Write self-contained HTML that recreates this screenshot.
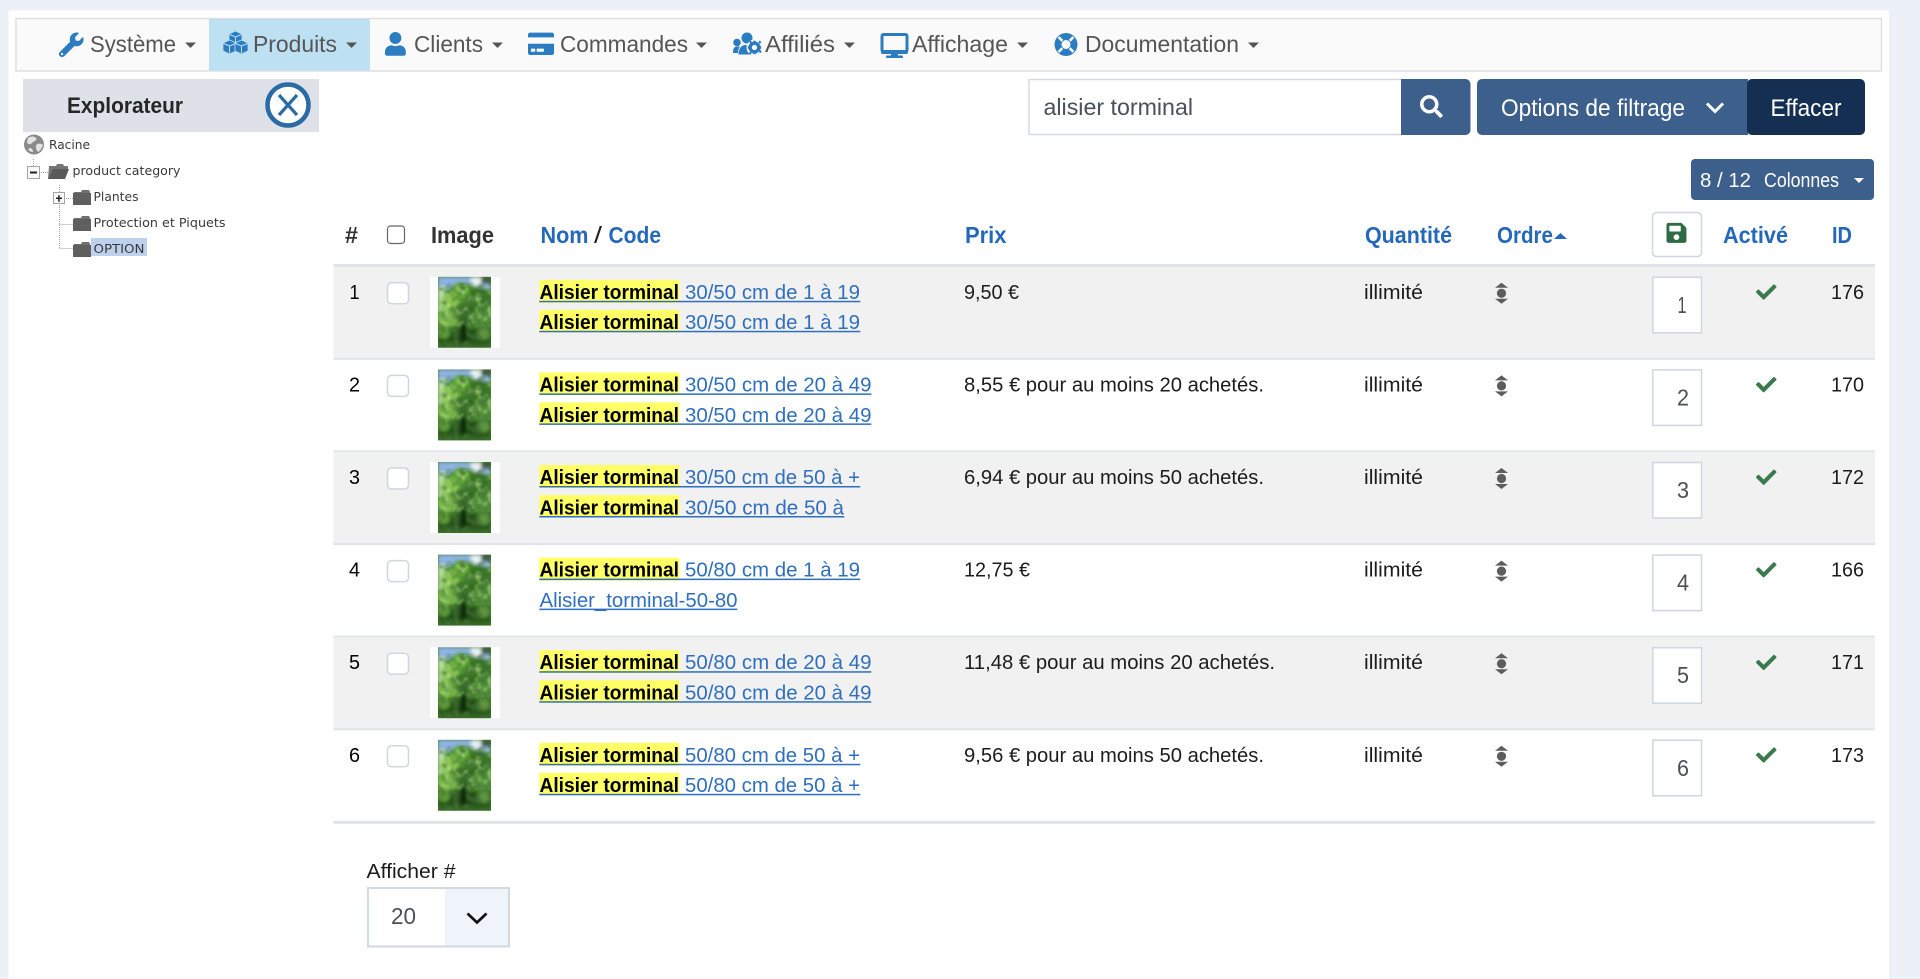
<!DOCTYPE html>
<html lang="fr">
<head>
<meta charset="utf-8">
<title>Produits</title>
<style>
html,body{margin:0;padding:0;width:1920px;height:979px;overflow:hidden;background:#ecf0f7}
svg{display:block}
text{font-family:"Liberation Sans",sans-serif;white-space:pre}
.nav{font-size:23.5px;fill:#555}
.th{font-size:23px;font-weight:bold;fill:#2468bb}
.thd{font-size:23px;font-weight:bold;fill:#333}
.sl{font-size:23px;font-weight:normal;fill:#222}
.td{font-size:20px;fill:#1c1c1c}
.num{font-size:20.5px;fill:#000}
.hl{font-size:20px;font-weight:bold;fill:#000}
.lk{font-size:20px;fill:#2f6fbe}
.tree{font-family:"DejaVu Sans",sans-serif;font-size:12.5px;fill:#3a3a3a}
.btn{font-size:24px;fill:#fff}
.inp{font-size:23.5px;fill:#495057}
.dg{font-size:23px;fill:#495057}
</style>
</head>
<body>
<svg width="1920" height="979" viewBox="0 0 1920 979" xmlns="http://www.w3.org/2000/svg">
<defs>
<filter id="b" x="-10%" y="-10%" width="120%" height="120%"><feGaussianBlur stdDeviation="1.8"/></filter>
<filter id="dk" x="0" y="0" width="100%" height="100%"><feTurbulence type="fractalNoise" baseFrequency=".14" numOctaves="2" seed="4"/><feColorMatrix values="0 0 0 0 .06  0 0 0 0 .17  0 0 0 0 .04  2.2 0 0 0 -.95"/><feGaussianBlur stdDeviation=".9"/></filter>
<filter id="lt" x="0" y="0" width="100%" height="100%"><feTurbulence type="fractalNoise" baseFrequency=".16" numOctaves="2" seed="11"/><feColorMatrix values="0 0 0 0 .55  0 0 0 0 .8  0 0 0 0 .3  0 1.6 0 0 -.72"/><feGaussianBlur stdDeviation=".9"/></filter>
<clipPath id="tc"><rect x="0" y="0" width="53" height="71"/></clipPath>
<g id="tree" clip-path="url(#tc)">
<rect width="53" height="71" fill="#3f7f26"/>
<g filter="url(#b)">
<rect width="53" height="12" fill="#8fb3e6"/>
<rect x="0" y="10" width="7" height="30" fill="#b9dcae"/>
<rect x="33" y="0" width="10" height="9" fill="#e8f0f4"/>
<rect x="43" y="0" width="10" height="7" fill="#3c5a3a"/>
<circle cx="26" cy="27" r="21" fill="#458a26"/>
<circle cx="11" cy="25" r="9" fill="#84c24c"/>
<circle cx="22" cy="13" r="8" fill="#62a834"/>
<circle cx="41" cy="20" r="10" fill="#357222"/>
<circle cx="9" cy="41" r="10" fill="#70b040"/>
<circle cx="29" cy="38" r="11" fill="#306a20"/>
<circle cx="44" cy="41" r="10" fill="#4e8e34"/>
<rect x="0" y="52" width="53" height="19" fill="#244f18"/>
<circle cx="6" cy="56" r="6" fill="#5f9c38"/>
<circle cx="46" cy="57" r="6" fill="#5f963e"/>
<rect x="23" y="46" width="5" height="20" fill="#10200b"/>
<rect x="0" y="66" width="53" height="5" fill="#336424"/>
</g>
<rect y="6" width="53" height="65" filter="url(#dk)"/>
<rect y="8" width="53" height="42" filter="url(#lt)"/>
</g>
<path id="chk" d="M173.898 439.404l-166.4-166.4c-9.997-9.997-9.997-26.206 0-36.204l36.203-36.204c9.997-9.998 26.207-9.998 36.204 0L192 312.69 432.095 72.596c9.997-9.997 26.207-9.997 36.204 0l36.203 36.204c9.997 9.997 9.997 26.206 0 36.204l-294.4 294.401c-9.998 9.997-26.207 9.997-36.204-.001z"/>
<g id="folder"><path d="M1 3h7l1-2h7l1 2v1H1z" fill="#707070"/><rect x="0" y="4" width="18" height="12" fill="#5f5f5f"/></g>
<g id="common">
<rect x="387.5" y="283" width="21" height="21" rx="4" fill="#fff" stroke="#cfd6df" stroke-width="1.5"/>
<rect x="430" y="277" width="70" height="71" fill="#fff"/>
<use href="#tree" x="438" y="277"/>
<path d="M1495 288l6.500 -5 6.500 5z M1495 299l6.500 5 6.500 -5z" fill="#5d5d5d"/>
<circle cx="1501.500" cy="293.500" r="4.600" fill="#5d5d5d"/>
<rect x="1652.800" y="277.500" width="48.700" height="55.500" fill="#fff" stroke="#cfd6df" stroke-width="1.500"/>
<g transform="translate(1756,282) scale(.04)" fill="#3b7a4e"><use href="#chk"/></g>
<text x="1364" y="299" class="td" textLength="59" lengthAdjust="spacingAndGlyphs">illimité</text>
</g>
</defs>

<rect width="1920" height="979" fill="#ecf0f7"/>
<rect x="8.500" y="10.500" width="1880.500" height="969" fill="#fff"/>

<!-- navbar -->
<rect x="16" y="18.500" width="1865.500" height="52.500" fill="#fafafa" stroke="#dcdcdc" stroke-width="1.300"/>
<rect x="209" y="19" width="161" height="51.500" fill="#bee0f3"/>

<g transform="translate(59,32.500) scale(.048)" fill="#2b7cc0"><path d="M507.73 109.1c-2.24-9.03-13.54-12.09-20.12-5.51l-74.36 74.36-67.88-11.31-11.31-67.88 74.36-74.36c6.62-6.62 3.43-17.900-5.660-20.160-47.380-11.740-99.550.91-136.580 37.930-39.640 39.640-50.550 97.100-34.050 147.200L18.740 402.760c-24.990 24.990-24.990 65.510 0 90.500 24.990 24.990 65.510 24.990 90.500 0l213.210-213.210c50.120 16.710 107.470 5.680 147.370-34.220 37.070-37.070 49.700-89.320 37.910-136.730zM64 472c-13.250 0-24-10.750-24-24 0-13.260 10.750-24 24-24s24 10.740 24 24c0 13.250-10.750 24-24 24z"/></g>
<text x="90" y="52" class="nav" textLength="86" lengthAdjust="spacingAndGlyphs">Système</text>
<path d="M185 42.500h11l-5.500 5.500z" fill="#555"/>

<g fill="#2b7cc0" stroke="#bee0f3" stroke-width=".8">
<path d="M229 34l6.500 -3 6.500 3v7.500l-6.500 3 -6.500 -3z"/>
<path d="M223 43l6.500 -3 6.500 3v8l-6.500 3 -6.500 -3z"/>
<path d="M235 43l6.500 -3 6.500 3v8l-6.500 3 -6.500 -3z"/>
</g>
<g fill="none" stroke="#bee0f3" stroke-width="1"><path d="M229.500 34.500l6 2.500 6 -2.500M235.500 37v6M223.500 43.500l6 2.500 6 -2.500M229.500 46v7M235.500 43.500l6 2.500 6 -2.500M241.500 46v7"/></g>
<text x="253" y="52" class="nav" textLength="84" lengthAdjust="spacingAndGlyphs">Produits</text>
<path d="M346 42.500h11l-5.500 5.500z" fill="#555"/>

<g transform="translate(385,32) scale(.0465)" fill="#2b7cc0"><path d="M224 256c70.700 0 128-57.300 128-128S294.700 0 224 0 96 57.300 96 128s57.300 128 128 128zm89.600 32h-16.700c-22.200 10.200-46.900 16-72.900 16s-50.600-5.800-72.900-16h-16.700C60.200 288 0 348.200 0 422.400V464c0 26.500 21.500 48 48 48h352c26.500 0 48-21.500 48-48v-41.600c0-74.200-60.200-134.400-134.400-134.400z"/></g>
<text x="414" y="52" class="nav" textLength="69" lengthAdjust="spacingAndGlyphs">Clients</text>
<path d="M492 42.500h11l-5.500 5.500z" fill="#555"/>

<g transform="translate(528,31) scale(.0452,.0500)" fill="#2b7cc0"><path d="M0 432c0 26.500 21.500 48 48 48h480c26.500 0 48-21.500 48-48V256H0v176zm192-68c0-6.600 5.400-12 12-12h136c6.600 0 12 5.400 12 12v40c0 6.600-5.400 12-12 12H204c-6.600 0-12-5.400-12-12v-40zm-128 0c0-6.600 5.400-12 12-12h72c6.600 0 12 5.400 12 12v40c0 6.600-5.400 12-12 12H76c-6.600 0-12-5.400-12-12v-40zM576 80v48H0V80c0-26.500 21.500-48 48-48h480c26.500 0 48 21.500 48 48z"/></g>
<text x="560" y="52" class="nav" textLength="128" lengthAdjust="spacingAndGlyphs">Commandes</text>
<path d="M696 42.500h11l-5.500 5.500z" fill="#555"/>

<g fill="#2b7cc0">
<circle cx="747" cy="38" r="5.500"/>
<circle cx="737" cy="42.500" r="3.800"/>
<path d="M733 53c0-4 1-6.500 4-6.500h3c-1.500 2-2 4-2 6.500z"/>
<path d="M738.500 54.500c0-6 3-9.500 7-9.500h3c3 0 5 2 6 5v4.500z"/>
<circle cx="754.500" cy="47.500" r="8" fill="#fafafa"/>
<circle cx="754.500" cy="47.500" r="4.300" fill="none" stroke="#2b7cc0" stroke-width="3.400"/>
<path d="M753.300 40.800h2.400v2.600h-2.400zM753.300 51.600h2.400v2.600h-2.400zM747.800 46.300h2.600v2.400h-2.600zM758.600 46.300h2.600v2.400h-2.600zM749.100 41.500l1.800-1 1.200 2.200-1.800 1zM758.700 50.900l1.800-1 1.200 2.200-1.800 1zM759.500 40.500l1.800 1-1.200 2.200-1.800-1zM749.900 51.800l1.800 1-1.200 2-1.800-1z"/>
</g>
<text x="765" y="52" class="nav" textLength="70" lengthAdjust="spacingAndGlyphs">Affiliés</text>
<path d="M844 42.500h11l-5.500 5.500z" fill="#555"/>

<g fill="none" stroke="#2b7cc0" stroke-width="3"><rect x="882" y="34.500" width="25" height="17" rx="1.500"/></g>
<path d="M881 50h27v2.500q0 1.500-2 1.500h-23q-2 0-2-1.500z" fill="#2b7cc0"/>
<rect x="891" y="53" width="7" height="3" fill="#2b7cc0"/>
<rect x="886" y="55.500" width="17" height="2.500" rx="1" fill="#2b7cc0"/>
<text x="912" y="52" class="nav" textLength="96" lengthAdjust="spacingAndGlyphs">Affichage</text>
<path d="M1017 42.500h11l-5.500 5.500z" fill="#555"/>

<circle cx="1066" cy="44.500" r="11.500" fill="#2b7cc0"/>
<circle cx="1066" cy="44.500" r="4.500" fill="#fafafa"/>
<g stroke="#fafafa" stroke-width="2.600" stroke-linecap="butt"><path d="M1058.500 37l3.800 3.800M1073.500 37l-3.800 3.800M1058.500 52l3.800 -3.800M1073.500 52l-3.800 -3.800"/></g>
<text x="1085" y="52" class="nav" textLength="154" lengthAdjust="spacingAndGlyphs">Documentation</text>
<path d="M1248 42.500h11l-5.500 5.500z" fill="#555"/>

<!-- explorer -->
<rect x="23" y="79" width="296" height="53" fill="#dee2e8"/>
<text x="67" y="113" font-size="22.500" font-weight="bold" fill="#262626" textLength="116" lengthAdjust="spacingAndGlyphs">Explorateur</text>
<circle cx="288" cy="105" r="20.500" fill="#fff" stroke="#2a6aa5" stroke-width="4.500"/>
<path d="M279 95l18 20M297 95l-18 20" stroke="#2a6aa5" stroke-width="3.200" fill="none"/>

<!-- tree -->
<circle cx="34" cy="144.500" r="10" fill="#8a8a8a"/>
<path d="M28 138c3-2 6-2 8 0s-2 3-4 5-5 1-5-1zM37 144c3-1 5 0 6 1-1 3-3 6-5 7-2-2-3-6-1-8zM30 148c2 0 3 2 3 4-2 0-4-1-5-3z" fill="#e2e2e2"/>
<text x="49" y="149" class="tree" textLength="41" lengthAdjust="spacingAndGlyphs">Racine</text>
<g stroke="#a5a5a5" stroke-width="1" stroke-dasharray="1 1" fill="none">
<path d="M33.500 159v7M39 172.500h9M59.500 185v63M64 198.500h9M59.500 224.500h14M59.500 248.500h14"/>
</g>
<rect x="27.500" y="166.500" width="12" height="12" fill="#fafafa" stroke="#a5a5a5"/>
<rect x="30" y="171.500" width="7" height="2" fill="#222"/>
<rect x="53.500" y="192.500" width="11" height="11" fill="#fafafa" stroke="#a5a5a5"/>
<path d="M56 197.500h6v1.500h-6zM58.200 195.200h1.500v6.500h-1.500z" fill="#222"/>
<path d="M49 166h7l1 -2h6l1 2h4v3H54l-3 10h-3z" fill="#757575"/>
<path d="M53 169h16l-4 10H48z" fill="#5a5a5a"/>
<text x="72.500" y="175" class="tree" textLength="108" lengthAdjust="spacingAndGlyphs">product category</text>
<use href="#folder" x="73" y="189"/>
<text x="93.500" y="201" class="tree" textLength="45" lengthAdjust="spacingAndGlyphs">Plantes</text>
<use href="#folder" x="73" y="215"/>
<text x="93.500" y="227" class="tree" textLength="132" lengthAdjust="spacingAndGlyphs">Protection et Piquets</text>
<rect x="91" y="238" width="56" height="18" fill="#bdd0ec"/>
<use href="#folder" x="73" y="241"/>
<text x="93.500" y="253" class="tree" textLength="51" lengthAdjust="spacingAndGlyphs">OPTION</text>

<!-- search -->
<rect x="1029" y="79.500" width="373" height="55" fill="#fff" stroke="#d5d9e0" stroke-width="1.500"/>
<text x="1043.500" y="115" class="inp" textLength="149.500" lengthAdjust="spacingAndGlyphs">alisier torminal</text>
<path d="M1401 79h64.500a5 5 0 0 1 5 5v46a5 5 0 0 1 -5 5h-64.500z" fill="#3d5f8c"/>
<g transform="translate(1420,95) scale(.0445)" fill="#fff"><path d="M505 442.700L405.300 343c-4.500-4.500-10.600-7-17-7H372c27.600-35.300 44-79.700 44-128C416 93.100 322.900 0 208 0S0 93.100 0 208s93.100 208 208 208c48.300 0 92.700-16.400 128-44v16.300c0 6.400 2.500 12.500 7 17l99.700 99.700c9.400 9.400 24.600 9.400 33.900 0l28.300-28.300c9.400-9.400 9.400-24.600.1-34zM208 336c-70.700 0-128-57.200-128-128 0-70.700 57.200-128 128-128 70.700 0 128 57.200 128 128 0 70.700-57.200 128-128 128z"/></g>
<path d="M1482 79h266v56h-266a5 5 0 0 1 -5 -5v-46a5 5 0 0 1 5 -5z" fill="#3d5f8c"/>
<text x="1501" y="116" class="btn" textLength="184" lengthAdjust="spacingAndGlyphs">Options de filtrage</text>
<path d="M1707 103.500l8 8 8 -8" stroke="#fff" stroke-width="3" fill="none"/>
<path d="M1752 79h108a5 5 0 0 1 5 5v46a5 5 0 0 1 -5 5h-108a5 5 0 0 1 -5 -5v-46a5 5 0 0 1 5 -5z" fill="#152f52"/>
<text x="1770.500" y="116" class="btn" textLength="71" lengthAdjust="spacingAndGlyphs">Effacer</text>

<rect x="1691" y="159" width="183" height="41" rx="4" fill="#3d5f8c"/>
<text x="1700" y="187" font-size="20" fill="#fff" textLength="51" lengthAdjust="spacingAndGlyphs">8 / 12</text>
<text x="1764" y="187" font-size="20" fill="#fff" textLength="75" lengthAdjust="spacingAndGlyphs">Colonnes</text>
<path d="M1854 178h10l-5 5z" fill="#fff"/>

<!-- header -->
<text x="345" y="243" class="thd" textLength="13" lengthAdjust="spacingAndGlyphs">#</text>
<rect x="387.500" y="226" width="17" height="17.500" rx="3" fill="#fff" stroke="#666" stroke-width="1.200"/>
<text x="431" y="243" class="thd" textLength="63" lengthAdjust="spacingAndGlyphs">Image</text>
<text x="540.500" y="243" class="th" textLength="48" lengthAdjust="spacingAndGlyphs">Nom</text>
<text x="594" y="243" class="sl" textLength="8" lengthAdjust="spacingAndGlyphs">/</text>
<text x="608.500" y="243" class="th" textLength="52.500" lengthAdjust="spacingAndGlyphs">Code</text>
<text x="965" y="243" class="th" textLength="41.500" lengthAdjust="spacingAndGlyphs">Prix</text>
<text x="1365" y="243" class="th" textLength="87" lengthAdjust="spacingAndGlyphs">Quantité</text>
<text x="1497" y="243" class="th" textLength="56" lengthAdjust="spacingAndGlyphs">Ordre</text>
<path d="M1554 239l6.500 -6 6.500 6z" fill="#2468bb"/>
<rect x="1652.500" y="212.500" width="49" height="44" rx="4" fill="#fff" stroke="#cfd6df" stroke-width="1.500"/>
<g transform="translate(1666.500,221.500) scale(.0445)" fill="#2f6b45"><path d="M433.941 129.941l-83.882-83.882A48 48 0 0 0 316.118 32H48C21.490 32 0 53.490 0 80v352c0 26.510 21.490 48 48 48h352c26.510 0 48-21.490 48-48V163.882a48 48 0 0 0-14.059-33.941zM224 416c-35.346 0-64-28.654-64-64 0-35.346 28.654-64 64-64s64 28.654 64 64c0 35.346-28.654 64-64 64zm96-304.520V212c0 6.627-5.373 12-12 12H76c-6.627 0-12-5.373-12-12V108c0-6.627 5.373-12 12-12h228.520c3.183 0 6.235 1.264 8.485 3.515l3.480 3.480A11.996 11.996 0 0 1 320 111.480z"/></g>
<text x="1723" y="243" class="th" textLength="65" lengthAdjust="spacingAndGlyphs">Activé</text>
<text x="1832" y="243" class="th" textLength="20" lengthAdjust="spacingAndGlyphs">ID</text>
<rect x="333.500" y="264" width="1541.500" height="3" fill="#dfe3e8"/>

<!-- row 1 -->
<g transform="translate(0,-.2)">
<rect x="333.500" y="267" width="1541.500" height="91" fill="#f1f1f2"/>
<rect x="333.500" y="358" width="1541.500" height="2" fill="#dfe3e8"/>
<use href="#common"/>
<text x="349.500" y="299" class="num" textLength="10" lengthAdjust="spacingAndGlyphs">1</text>
<rect x="539.300" y="280" width="140" height="23" fill="#ffff66"/><rect x="539.300" y="310" width="140" height="22.500" fill="#ffff66"/>
<text x="539.500" y="299" class="hl" textLength="139.500" lengthAdjust="spacingAndGlyphs">Alisier torminal</text>
<text x="685" y="299" class="lk" textLength="175" lengthAdjust="spacingAndGlyphs">30/50 cm de 1 à 19</text>
<rect x="539.300" y="301" width="321" height="1.500" fill="#2f6fbe"/>
<text x="539.500" y="329.400" class="hl" textLength="139.500" lengthAdjust="spacingAndGlyphs">Alisier torminal</text>
<text x="685" y="329.400" class="lk" textLength="175" lengthAdjust="spacingAndGlyphs">30/50 cm de 1 à 19</text>
<rect x="539.300" y="331" width="321" height="1.500" fill="#2f6fbe"/>
<text x="964" y="299" class="td" textLength="55" lengthAdjust="spacingAndGlyphs">9,50 €</text>
<text x="1677.500" y="313" class="dg" textLength="9" lengthAdjust="spacingAndGlyphs">1</text>
<text x="1831" y="299" class="td" textLength="33" lengthAdjust="spacingAndGlyphs">176</text>
</g>

<!-- row 2 -->
<g transform="translate(0,92.400)">
<rect x="333.500" y="358" width="1541.500" height="2" fill="#dfe3e8"/>
<use href="#common"/>
<text x="349" y="299" class="num" textLength="11" lengthAdjust="spacingAndGlyphs">2</text>
<rect x="539.300" y="280" width="140" height="23" fill="#ffff66"/><rect x="539.300" y="310" width="140" height="22.500" fill="#ffff66"/>
<text x="539.500" y="299" class="hl" textLength="139.500" lengthAdjust="spacingAndGlyphs">Alisier torminal</text>
<text x="685" y="299" class="lk" textLength="186.500" lengthAdjust="spacingAndGlyphs">30/50 cm de 20 à 49</text>
<rect x="539.300" y="301" width="332" height="1.500" fill="#2f6fbe"/>
<text x="539.500" y="329.400" class="hl" textLength="139.500" lengthAdjust="spacingAndGlyphs">Alisier torminal</text>
<text x="685" y="329.400" class="lk" textLength="186.500" lengthAdjust="spacingAndGlyphs">30/50 cm de 20 à 49</text>
<rect x="539.300" y="331" width="332" height="1.500" fill="#2f6fbe"/>
<text x="964" y="299" class="td" textLength="300" lengthAdjust="spacingAndGlyphs">8,55 € pour au moins 20 achetés.</text>
<text x="1677" y="313" class="dg" textLength="12" lengthAdjust="spacingAndGlyphs">2</text>
<text x="1831" y="299" class="td" textLength="33" lengthAdjust="spacingAndGlyphs">170</text>
</g>

<!-- row 3 -->
<g transform="translate(0,185)">
<rect x="333.500" y="267" width="1541.500" height="91" fill="#f1f1f2"/>
<rect x="333.500" y="358" width="1541.500" height="2" fill="#dfe3e8"/>
<use href="#common"/>
<text x="349" y="299" class="num" textLength="11" lengthAdjust="spacingAndGlyphs">3</text>
<rect x="539.300" y="280" width="140" height="23" fill="#ffff66"/><rect x="539.300" y="310" width="140" height="22.500" fill="#ffff66"/>
<text x="539.500" y="299" class="hl" textLength="139.500" lengthAdjust="spacingAndGlyphs">Alisier torminal</text>
<text x="685" y="299" class="lk" textLength="175" lengthAdjust="spacingAndGlyphs">30/50 cm de 50 à +</text>
<rect x="539.300" y="301" width="321" height="1.500" fill="#2f6fbe"/>
<text x="539.500" y="329.400" class="hl" textLength="139.500" lengthAdjust="spacingAndGlyphs">Alisier torminal</text>
<text x="685" y="329.400" class="lk" textLength="159" lengthAdjust="spacingAndGlyphs">30/50 cm de 50 à</text>
<rect x="539.300" y="331" width="305" height="1.500" fill="#2f6fbe"/>
<text x="964" y="299" class="td" textLength="300" lengthAdjust="spacingAndGlyphs">6,94 € pour au moins 50 achetés.</text>
<text x="1677" y="313" class="dg" textLength="12" lengthAdjust="spacingAndGlyphs">3</text>
<text x="1831" y="299" class="td" textLength="33" lengthAdjust="spacingAndGlyphs">172</text>
</g>

<!-- row 4 -->
<g transform="translate(0,277.600)">
<rect x="333.500" y="358" width="1541.500" height="2" fill="#dfe3e8"/>
<use href="#common"/>
<text x="349" y="299" class="num" textLength="11" lengthAdjust="spacingAndGlyphs">4</text>
<rect x="539.300" y="280" width="140" height="23" fill="#ffff66"/>
<text x="539.500" y="299" class="hl" textLength="139.500" lengthAdjust="spacingAndGlyphs">Alisier torminal</text>
<text x="685" y="299" class="lk" textLength="175" lengthAdjust="spacingAndGlyphs">50/80 cm de 1 à 19</text>
<rect x="539.300" y="301" width="321" height="1.500" fill="#2f6fbe"/>
<text x="539.500" y="329.400" class="lk" textLength="198" lengthAdjust="spacingAndGlyphs">Alisier_torminal-50-80</text>
<rect x="539.300" y="331" width="198" height="1.500" fill="#2f6fbe"/>
<text x="964" y="299" class="td" textLength="66" lengthAdjust="spacingAndGlyphs">12,75 €</text>
<text x="1677" y="313" class="dg" textLength="12" lengthAdjust="spacingAndGlyphs">4</text>
<text x="1831" y="299" class="td" textLength="33" lengthAdjust="spacingAndGlyphs">166</text>
</g>

<!-- row 5 -->
<g transform="translate(0,370.200)">
<rect x="333.500" y="267" width="1541.500" height="91" fill="#f1f1f2"/>
<rect x="333.500" y="358" width="1541.500" height="2" fill="#dfe3e8"/>
<use href="#common"/>
<text x="349" y="299" class="num" textLength="11" lengthAdjust="spacingAndGlyphs">5</text>
<rect x="539.300" y="280" width="140" height="23" fill="#ffff66"/><rect x="539.300" y="310" width="140" height="22.500" fill="#ffff66"/>
<text x="539.500" y="299" class="hl" textLength="139.500" lengthAdjust="spacingAndGlyphs">Alisier torminal</text>
<text x="685" y="299" class="lk" textLength="186.500" lengthAdjust="spacingAndGlyphs">50/80 cm de 20 à 49</text>
<rect x="539.300" y="301" width="332" height="1.500" fill="#2f6fbe"/>
<text x="539.500" y="329.400" class="hl" textLength="139.500" lengthAdjust="spacingAndGlyphs">Alisier torminal</text>
<text x="685" y="329.400" class="lk" textLength="186.500" lengthAdjust="spacingAndGlyphs">50/80 cm de 20 à 49</text>
<rect x="539.300" y="331" width="332" height="1.500" fill="#2f6fbe"/>
<text x="964" y="299" class="td" textLength="311" lengthAdjust="spacingAndGlyphs">11,48 € pour au moins 20 achetés.</text>
<text x="1677" y="313" class="dg" textLength="12" lengthAdjust="spacingAndGlyphs">5</text>
<text x="1831" y="299" class="td" textLength="33" lengthAdjust="spacingAndGlyphs">171</text>
</g>

<!-- row 6 -->
<g transform="translate(0,462.800)">
<rect x="333.500" y="358" width="1541.500" height="3" fill="#dfe3e8"/>
<use href="#common"/>
<text x="349" y="299" class="num" textLength="11" lengthAdjust="spacingAndGlyphs">6</text>
<rect x="539.300" y="280" width="140" height="23" fill="#ffff66"/><rect x="539.300" y="310" width="140" height="22.500" fill="#ffff66"/>
<text x="539.500" y="299" class="hl" textLength="139.500" lengthAdjust="spacingAndGlyphs">Alisier torminal</text>
<text x="685" y="299" class="lk" textLength="175" lengthAdjust="spacingAndGlyphs">50/80 cm de 50 à +</text>
<rect x="539.300" y="301" width="321" height="1.500" fill="#2f6fbe"/>
<text x="539.500" y="329.400" class="hl" textLength="139.500" lengthAdjust="spacingAndGlyphs">Alisier torminal</text>
<text x="685" y="329.400" class="lk" textLength="175" lengthAdjust="spacingAndGlyphs">50/80 cm de 50 à +</text>
<rect x="539.300" y="331" width="321" height="1.500" fill="#2f6fbe"/>
<text x="964" y="299" class="td" textLength="300" lengthAdjust="spacingAndGlyphs">9,56 € pour au moins 50 achetés.</text>
<text x="1677" y="313" class="dg" textLength="12" lengthAdjust="spacingAndGlyphs">6</text>
<text x="1831" y="299" class="td" textLength="33" lengthAdjust="spacingAndGlyphs">173</text>
</g>

<!-- footer -->
<text x="366.500" y="878" font-size="20.500" fill="#1c1c1c" textLength="89" lengthAdjust="spacingAndGlyphs">Afficher #</text>
<rect x="368" y="888" width="141" height="58.500" fill="#fff" stroke="#d3d8e0" stroke-width="2"/>
<rect x="445" y="889" width="63" height="56.500" fill="#eff4fb"/>
<text x="391" y="924" class="inp" textLength="25" lengthAdjust="spacingAndGlyphs">20</text>
<path d="M467.500 913.500l9.500 9 9.500 -9" stroke="#111" stroke-width="2.700" fill="none"/>
</svg>
</body>
</html>
